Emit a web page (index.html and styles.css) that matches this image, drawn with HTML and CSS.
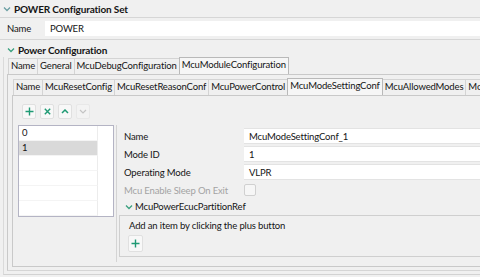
FILE: index.html
```html
<!DOCTYPE html>
<html lang="en">
<head>
  <meta charset="UTF-8">
  <title>POWER Configuration Set</title>
  <link rel="stylesheet" href="styles.css">
</head>
<body>
  <div class="section-head">
    <svg class="chev" width="8" height="6" viewBox="0 0 8 6"><path d="M1 1.5 L4 4.5 L7 1.5" fill="none" stroke="#6b9fa3" stroke-width="1.3"/></svg>
    <span>POWER Configuration Set</span>
  </div>
  <div class="name-row">
    <label class="name-label">Name</label>
    <div class="text-field">POWER</div>
  </div>
  <div class="section-head sub">
    <svg class="chev" width="8" height="6" viewBox="0 0 8 6"><path d="M1 1.5 L4 4.5 L7 1.5" fill="none" stroke="#3aa07f" stroke-width="1.3"/></svg>
    <span>Power Configuration</span>
  </div>

  <div class="folder outer">
    <div class="tabs">
      <div class="tab">Name</div>
      <div class="tab">General</div>
      <div class="tab">McuDebugConfiguration</div>
      <div class="tab active">McuModuleConfiguration</div>
    </div>
    <div class="folder-body outer-body">
      <div class="folder inner">
        <div class="tabs">
          <div class="tab">Name</div>
          <div class="tab">McuResetConfig</div>
          <div class="tab">McuResetReasonConf</div>
          <div class="tab">McuPowerControl</div>
          <div class="tab active">McuModeSettingConf</div>
          <div class="tab">McuAllowedModes</div>
          <div class="tab">McuRamSectorSettingConf</div>
        </div>
        <div class="folder-body inner-body">
          <div class="toolbar">
            <button class="tool">
              <svg width="9" height="9" viewBox="0 0 9 9"><path d="M4.5 0.5 V8.5 M0.5 4.5 H8.5" stroke="#1f9a74" stroke-width="1.4"/></svg>
            </button>
            <button class="tool">
              <svg width="7" height="7" viewBox="0 0 7 7"><path d="M0.8 0.8 L6.2 6.2 M6.2 0.8 L0.8 6.2" stroke="#1f9a74" stroke-width="1.4"/></svg>
            </button>
            <button class="tool">
              <svg width="8" height="5" viewBox="0 0 8 5"><path d="M1 4 L4 1 L7 4" fill="none" stroke="#1f9a74" stroke-width="1.5"/></svg>
            </button>
            <button class="tool disabled">
              <svg width="8" height="5" viewBox="0 0 8 5"><path d="M1 1 L4 4 L7 1" fill="none" stroke="#c4c4c4" stroke-width="1.2"/></svg>
            </button>
          </div>
          <div class="editor">
            <div class="list-col">
              <div class="list">
                <div class="list-row">0</div>
                <div class="list-row selected">1</div>
                <div class="list-row"></div>
                <div class="list-row"></div>
                <div class="list-row"></div>
                <div class="list-row"></div>
              </div>
            </div>
            <div class="form">
              <div class="form-row">
                <span class="form-label">Name</span>
                <div class="text-field">McuModeSettingConf_1</div>
              </div>
              <div class="form-row">
                <span class="form-label">Mode ID</span>
                <div class="text-field">1</div>
              </div>
              <div class="form-row">
                <span class="form-label">Operating Mode</span>
                <div class="text-field">VLPR</div>
              </div>
              <div class="form-row check-row">
                <span class="form-label disabled">Mcu Enable Sleep On Exit</span>
                <span class="checkbox"></span>
              </div>
              <div class="ref-head">
                <svg class="chev" width="8" height="6" viewBox="0 0 8 6"><path d="M1 1.5 L4 4.5 L7 1.5" fill="none" stroke="#3aa07f" stroke-width="1.3"/></svg>
                <span>McuPowerEcucPartitionRef</span>
              </div>
              <div class="ref-box">
                <div class="ref-hint">Add an item by clicking the plus button</div>
                <button class="tool add">
                  <svg width="9" height="9" viewBox="0 0 9 9"><path d="M4.5 0.5 V8.5 M0.5 4.5 H8.5" stroke="#1f9a74" stroke-width="1.4"/></svg>
                </button>
              </div>
            </div>
          </div>
        </div>
      </div>
    </div>
  </div>
</body>
</html>
```

FILE: styles.css
```css
body {
  margin: 0;
  width: 480px;
  height: 277px;
  overflow: hidden;
  background: #f0f0f0;
  font-family: 'Lato', 'Noto Sans', sans-serif;
  font-size: 9.5px;
  letter-spacing: -0.15px;
  color: #141414;
}

.section-head {
  display: flex;
  align-items: center;
  height: 18px;
  padding-left: 3px;
  font-weight: bold;
  font-size: 10px;
  border-bottom: 1px solid #d6d6d6;
  box-sizing: border-box;
}

.section-head.sub {
  height: 19px;
  border-bottom: none;
  padding-left: 7px;
}

.chev {
  margin-right: 3px;
  flex-shrink: 0;
}

.name-row {
  display: flex;
  align-items: center;
  height: 21px;
  border-bottom: 1px solid #d6d6d6;
}

.name-label {
  width: 38px;
  padding-left: 7px;
}

.text-field {
  flex: 1;
  height: 16px;
  line-height: 15px;
  background: #fff;
  border-top: 1px solid #e3e3e3;
  border-bottom: 1px solid #e3e3e3;
  padding-left: 5px;
  box-sizing: border-box;
  white-space: nowrap;
}

.name-row .text-field {
  height: 15px;
  border: none;
}

/* tab folders */
.folder {
  display: flex;
  flex-direction: column;
}

.folder.outer {
  margin-left: 3px;
  border-left: 1px solid #dadada;
  border-bottom: 1px solid #d2d2d2;
  padding-left: 3px;
  padding-bottom: 3px;
  margin-top: -2px;
  height: 218px;
  box-sizing: border-box;
}

.tabs {
  display: flex;
  align-items: flex-end;
  white-space: nowrap;
  overflow: hidden;
  padding-left: 1px;
}

.tab {
  height: 15px;
  line-height: 14px;
  padding: 0 2px;
  border: 1px solid #d4d4d4;
  border-bottom: none;
  border-left: none;
  background: #f0f0f0;
}

.tab:first-child {
  border-left: 1px solid #d4d4d4;
}

.tab.active {
  height: 16px;
  background: #f6f6f6;
  border-color: #b9b9b9;
  border-left: 1px solid #b9b9b9;
  margin-left: -1px;
}

.folder-body {
  flex: 1;
  border: 1px solid #c9c9c9;
  border-right: none;
  display: flex;
  flex-direction: column;
}

.outer-body {
  padding: 3px 0 3px 4px;
  border-bottom-color: #d5d5d5;
}

.folder.inner {
  flex: 1;
}

.inner-body {
  padding: 0 0 4px 5px;
}

.toolbar {
  display: flex;
  gap: 4px;
  padding: 8px 0 6px 4px;
}

.tool {
  width: 14px;
  height: 15px;
  padding: 0;
  display: flex;
  align-items: center;
  justify-content: center;
  background: #f8f8f8;
  border: 1px solid #e0e0e0;
  border-radius: 2px;
}

.tool.disabled {
  background: #f3f3f3;
  border-color: #e8e8e8;
}

.editor {
  flex: 1;
  display: flex;
}

.list-col {
  width: 96px;
  border-right: 1px solid #d4d4d4;
  padding-right: 2px;
}

.list {
  height: 92px;
  background: #fff;
  border: 1px solid #b4b4c4;
  box-sizing: border-box;
  display: flex;
  flex-direction: column;
  padding-right: 15px;
}

.list-row {
  height: 15px;
  line-height: 14px;
  padding-left: 3px;
  border-bottom: 1px solid #f4f4f4;
  border-right: 1px solid #ececec;
  box-sizing: border-box;
  flex-shrink: 0;
}

.list-row.selected {
  background: #d9d9d9;
}

.form {
  flex: 1;
  padding: 2px 0 0 7px;
  display: flex;
  flex-direction: column;
}

.form-row {
  display: flex;
  align-items: center;
  height: 18px;
}

.form-label {
  width: 120px;
  flex-shrink: 0;
  white-space: nowrap;
}

.form-label.disabled {
  color: #a3a3a3;
}

.checkbox {
  width: 10px;
  height: 10px;
  border: 1px solid #d0d0d0;
  border-radius: 2px;
  background: #f6f6f6;
}

.ref-head {
  display: flex;
  align-items: center;
  height: 15px;
  padding-left: 1px;
}

.ref-head .chev {
  margin-right: 2px;
}

.ref-box {
  margin-left: -5px;
  margin-top: 1px;
  height: 42px;
  border: 1px solid #cfcfcf;
  border-right: none;
  padding: 2px 0 0 9px;
  box-sizing: border-box;
}

.ref-hint {
  height: 17px;
  line-height: 16px;
}

.tool.add {
  width: 15px;
  height: 17px;
  margin-left: -1px;
}
```
